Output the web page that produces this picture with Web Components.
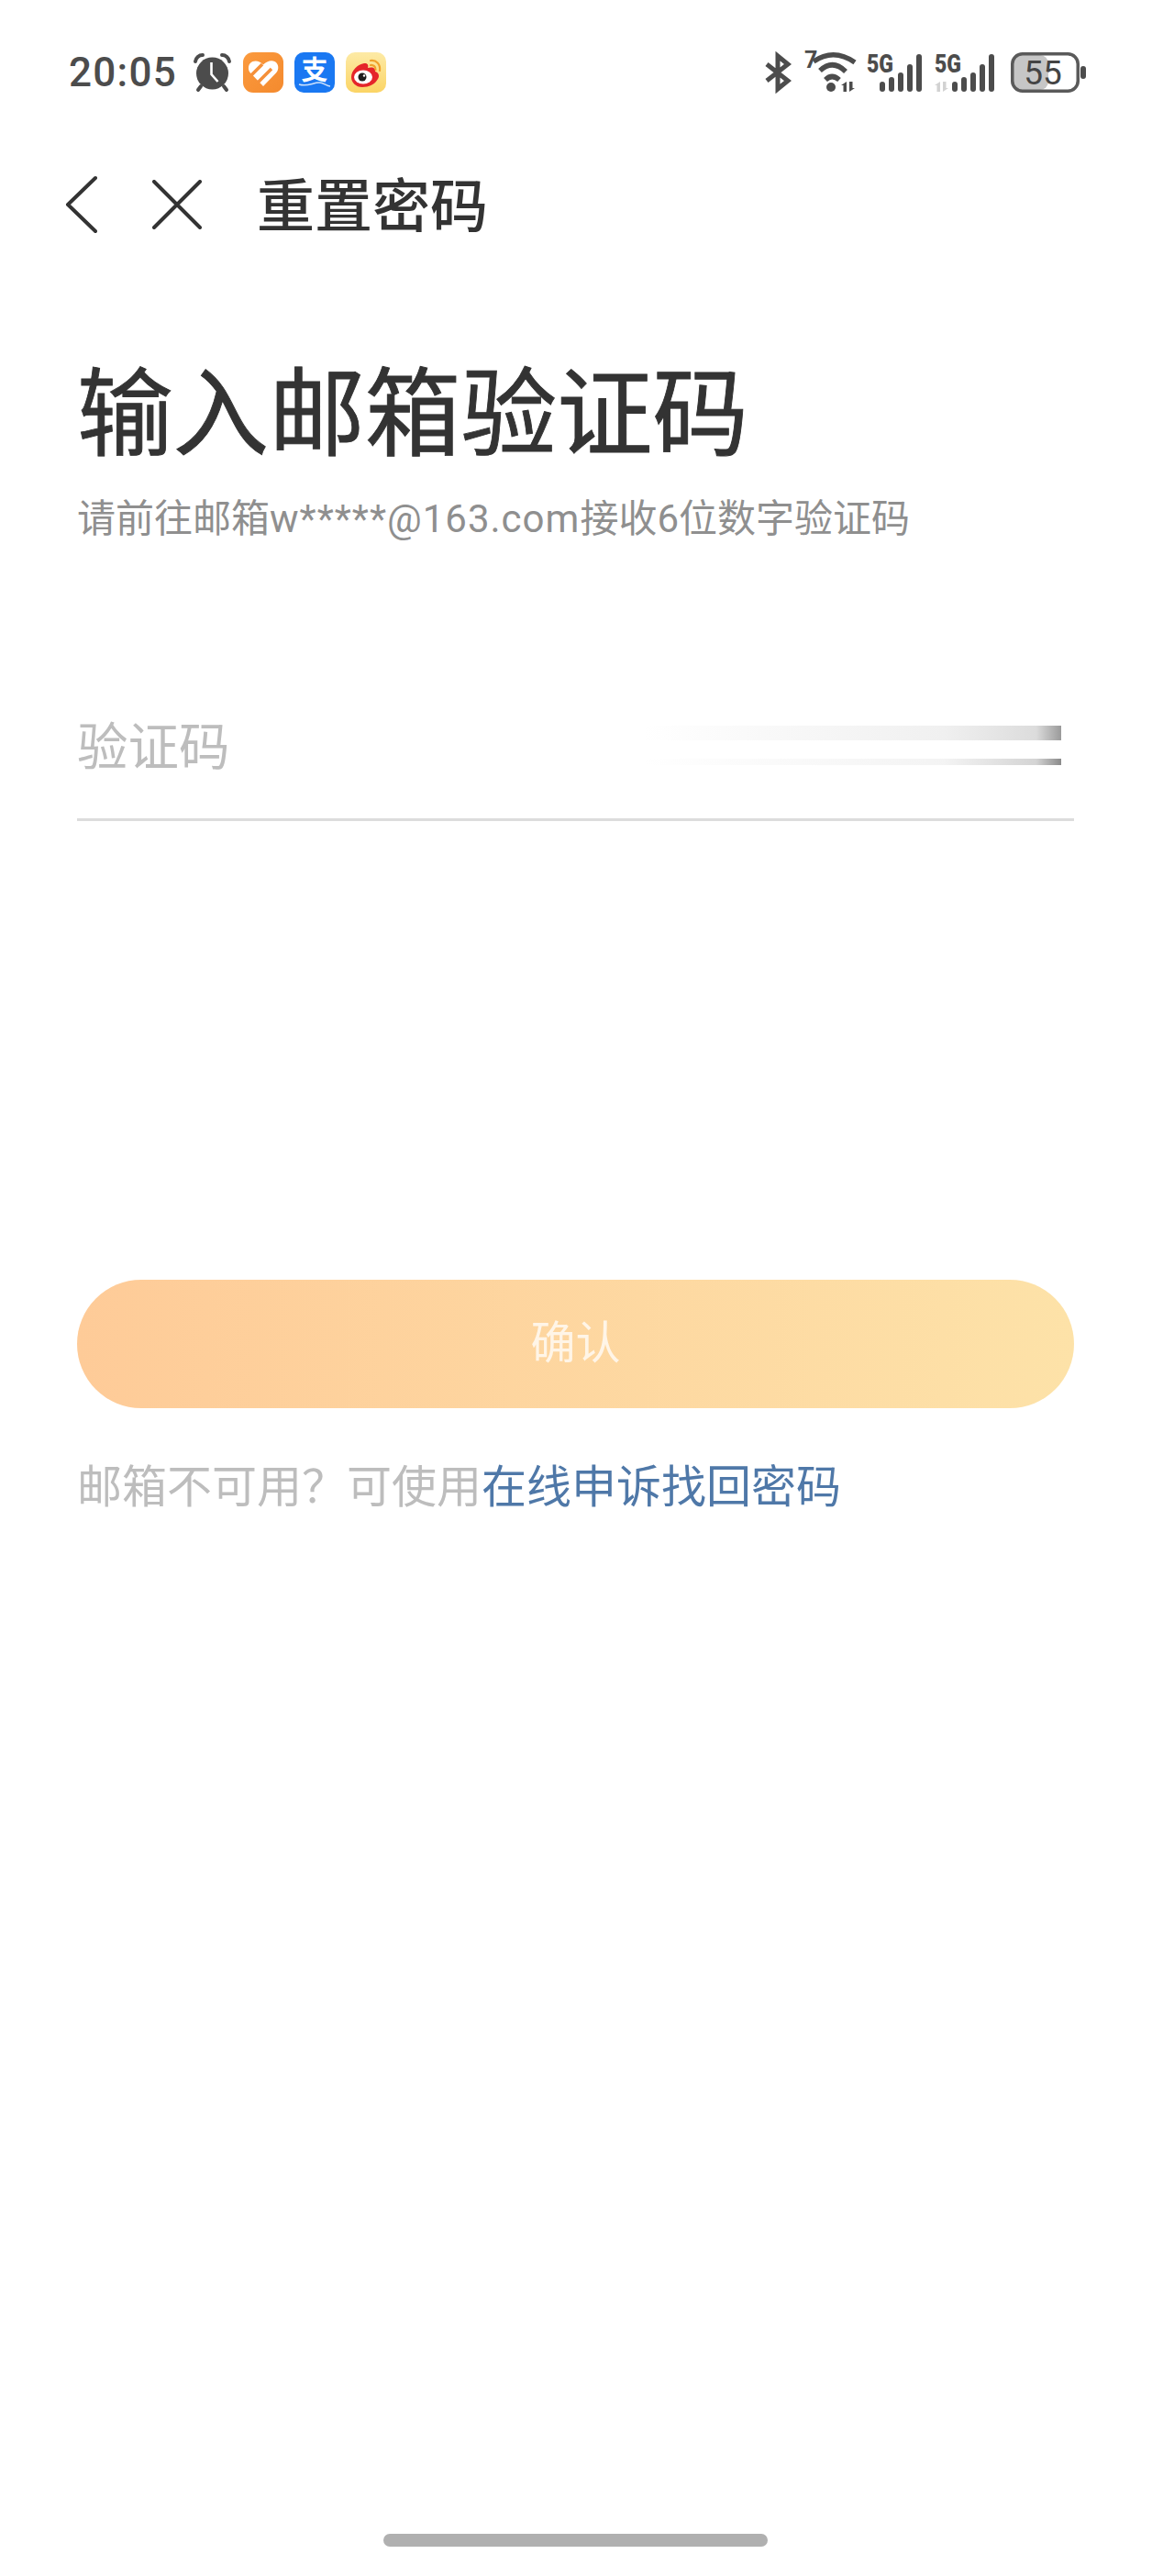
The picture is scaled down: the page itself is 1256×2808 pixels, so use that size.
<!DOCTYPE html>
<html lang="zh">
<head>
<meta charset="utf-8">
<title>重置密码</title>
<style>
    html, body { margin: 0; background: #fff; }
    body { font-family: "Noto Sans CJK SC", "Noto Sans", sans-serif; }
    reset-screen { height: 2808px; }
</style>
</head>
<body>
<reset-screen>
    <status-bar></status-bar>
    <nav-header>重置密码</nav-header>
    <page-heading sub="请前往邮箱w*****@163.com接收6位数字验证码">输入邮箱验证码</page-heading>
    <code-field placeholder="验证码"></code-field>
    <confirm-button>确认</confirm-button>
    <help-line link="在线申诉找回密码">邮箱不可用&#xFF1F;可使用</help-line>
    <home-indicator></home-indicator>
</reset-screen>

<script>
class ResetScreen extends HTMLElement {
    constructor() {
        super();
        this.attachShadow({ mode: 'open' });
        this.shadowRoot.innerHTML = `
            <style>
                :host { display: flex; flex-direction: column; width: 1256px; background: #fff; overflow: hidden; }
            </style>
            <slot></slot>
        `;
    }
}

class StatusBar extends HTMLElement {
    constructor() {
        super();
        this.attachShadow({ mode: 'open' });
        const bars = (x0) => [[0, 32], [10, 27], [20, 22], [30, 13], [40, 2]]
            .map(([dx, top]) => `<rect x="${x0 + dx}" y="${top}" width="6" height="${43 - top}" rx="3" fill="#4c4c4c"/>`).join('');
        const arrows = (x, c) => `
            <path d="M${x + 5} 32v11h-3.5v-7h-2.5z M${x + 8} 43v-11h3.5v7h2.5z" fill="${c}"/>`;
        this.shadowRoot.innerHTML = `
            <style>
                :host { display: flex; justify-content: space-between; align-items: center; height: 44px; padding: 57px 72px 0 75px; }
                .left, .right { display: flex; align-items: center; }
                .time { font: 500 44px/44px Roboto, sans-serif; color: #4c4c4c; width: 135px; letter-spacing: 1.3px; }
                svg { display: block; flex: none; overflow: visible; }
                svg text { font-family: Roboto, sans-serif; fill: #4c4c4c; }
                .app { margin-right: 12px; }
                .bt { margin-right: 14px; }
                .wifi { margin-right: 11px; }
                .sig1 { margin-right: 13px; }
                .sig2 { margin-right: 18px; }
            </style>
            <div class="left">
                <span class="time">20:05</span>
                <svg class="app" width="43" height="44" viewBox="0 0 43 44">
                    <path d="M3 10a8 8 0 0 1 8-7M40 10a8 8 0 0 0-8-7" fill="none" stroke="#4c4c4c" stroke-width="4" stroke-linecap="round"/>
                    <path d="M9 37l-3 4M34 37l3 4" stroke="#4c4c4c" stroke-width="4" stroke-linecap="round"/>
                    <circle cx="21.5" cy="23" r="17.5" fill="#4c4c4c"/>
                    <path d="M20.5 11v13l7 8" fill="none" stroke="#fff" stroke-width="2.6"/>
                </svg>
                <svg class="app" width="44" height="44" viewBox="0 0 44 44">
                    <defs><linearGradient id="og" x1="0" y1="0" x2="1" y2="1"><stop offset="0" stop-color="#fb9a3e"/><stop offset="1" stop-color="#f48a2e"/></linearGradient></defs>
                    <rect width="44" height="44" rx="11" fill="url(#og)"/>
                    <path d="M22 37L8 22.5C4.500 18.500 5.500 12 10.500 10C14.500 8.500 18.500 10 22 13.500C25.500 10 30.500 8 34.500 10C39 12.500 39.500 18.500 36 22.500Z" fill="#fff"/>
                    <path d="M9 25L21 13M16 33L31 18" stroke="#f5903a" stroke-width="3.500" fill="none"/>
                </svg>
                <svg class="app" width="44" height="44" viewBox="0 0 44 44">
                    <rect width="44" height="44" rx="10" fill="#1a78f2"/>
                    <text x="22" y="30" text-anchor="middle" font-size="29" font-weight="700" style="font-family:'Noto Sans CJK SC',sans-serif;fill:#fff">支</text>
                    <path d="M5 35C14 38 20 33 27 33C32 33 35 37 39 37" fill="none" stroke="#cfe2fb" stroke-width="1.500"/>
                </svg>
                <svg width="44" height="44" viewBox="0 0 44 44">
                    <defs><linearGradient id="wb" x1="0" y1="0" x2="0" y2="1"><stop offset="0" stop-color="#fdeaa6"/><stop offset="1" stop-color="#fbd465"/></linearGradient></defs>
                    <rect width="44" height="44" rx="10" fill="url(#wb)"/>
                    <path d="M6 27C6 20 13 13 20 12C24 11.500 25 14 24 17C29 15.500 33 17 32 21C36 22 37 26 35 29C32 35 25 38 18 38C11 38 6 33 6 27Z" fill="#e5252a"/>
                    <ellipse cx="19" cy="27" rx="10" ry="7.500" fill="#fff"/>
                    <circle cx="18" cy="27" r="4.500" fill="#1d1d1d"/>
                    <circle cx="20" cy="25.500" r="1.200" fill="#fff"/>
                    <path d="M27 9C33 8 38 13 37 20M27 14C30 13.500 33 16 32.500 19" fill="none" stroke="#f0a22c" stroke-width="2.200" stroke-linecap="round"/>
                </svg>
            </div>
            <div class="right">
                <svg class="bt" width="30" height="42" viewBox="0 0 30 42">
                    <path d="M3 12L26 30L15 39V3L26 12L3 30" fill="none" stroke="#4c4c4c" stroke-width="5"/>
                </svg>
                <svg class="wifi" width="57" height="44" viewBox="0 0 57 44">
                    <text x="0" y="17" font-size="25" font-weight="700">7</text>
                    <path d="M10 10Q32 -5 55 11M17 20Q31 7 45 21M23 30Q30 23 38 30" fill="none" stroke="#4c4c4c" stroke-width="5.500"/>
                    <circle cx="29" cy="38" r="5" fill="#4c4c4c"/>
                    ${arrows(41, '#4c4c4c')}
                </svg>
                <svg class="sig1" width="61" height="44" viewBox="0 0 61 44">
                    <text x="0" y="22" font-size="28" font-weight="900" textLength="29" lengthAdjust="spacingAndGlyphs">5G</text>
                    ${bars(14)}
                </svg>
                <svg class="sig2" width="65" height="44" viewBox="0 0 65 44">
                    <text x="0" y="22" font-size="28" font-weight="900" textLength="29" lengthAdjust="spacingAndGlyphs">5G</text>
                    ${arrows(1, '#d2d2d2')}
                    ${bars(19)}
                </svg>
                <svg width="82" height="44" viewBox="0 0 82 44">
                    <rect x="3" y="3" width="38" height="38" rx="9" fill="#c6c6c6"/>
                    <rect x="1.750" y="1.750" width="71.500" height="40.500" rx="11" fill="none" stroke="#5a5a5a" stroke-width="3.500"/>
                    <text x="35" y="35" text-anchor="middle" font-size="37" style="fill:#444">55</text>
                    <rect x="76" y="15" width="6" height="14" rx="3" fill="#4c4c4c"/>
                </svg>
            </div>
        `;
    }
}

class NavHeader extends HTMLElement {
    constructor() {
        super();
        this.attachShadow({ mode: 'open' });
        this.shadowRoot.innerHTML = `
            <style>
                :host { display: flex; align-items: center; height: 64px; margin-top: 90px; padding-left: 71px; }
                svg { display: block; flex: none; }
                .back { margin-right: 60px; }
                .close { margin-right: 60px; }
                .title { font-size: 63px; line-height: 64px; color: #333; font-weight: 500; white-space: nowrap; padding-bottom: 6px; }
            </style>
            <svg class="back" width="35" height="64" viewBox="0 0 35 64" fill="none" stroke="#333" stroke-width="4" stroke-linecap="round" stroke-linejoin="round">
                <path d="M33 3L3 32L33 61"/>
            </svg>
            <svg class="close" width="54" height="54" viewBox="0 0 54 54" fill="none" stroke="#333" stroke-width="4" stroke-linecap="round">
                <path d="M2 2L52 52M52 2L2 52"/>
            </svg>
            <span class="title"><slot></slot></span>
        `;
    }
}

class PageHeading extends HTMLElement {
    constructor() {
        super();
        this.attachShadow({ mode: 'open' });
        const sub = (this.getAttribute('sub') || '').replace(/w\*+@[\w.]+/, '<span class="mail">$&</span>');
        this.shadowRoot.innerHTML = `
            <style>
                :host { display: block; margin-top: 128px; padding-left: 84px; }
                h1 { margin: 0; font-size: 104.600px; line-height: 120px; font-weight: 400; -webkit-text-stroke: 0.900px #333; color: #333; white-space: nowrap; }
                p { margin: 35px 0 0; font-size: 42px; line-height: 56px; color: #8f8f8f; white-space: nowrap; font-family: Roboto, "Noto Sans CJK SC", sans-serif; }
                .mail { letter-spacing: 1px; }
            </style>
            <h1><slot></slot></h1>
            <p>${sub}</p>
        `;
    }
}

class CodeField extends HTMLElement {
    constructor() {
        super();
        this.attachShadow({ mode: 'open' });
        const placeholder = this.getAttribute('placeholder') || '';
        this.shadowRoot.innerHTML = `
            <style>
                :host { display: block; position: relative; margin: 142px 85px 0 84px; padding: 37px 0 45px; border-bottom: 3px solid #dcdcdc; }
                .ph { display: block; font-size: 55.500px; line-height: 74px; color: #bdbdbd; }
                .smear { position: absolute; left: 618px; width: 455px; }
                .a { top: 55px; height: 16px; background: linear-gradient(90deg, rgba(200,200,200,0), rgba(230,230,230,.6) 72%, #dcdcdc 94%, #9a9a9a 100%); }
                .b { top: 91px; height: 7px; background: linear-gradient(90deg, rgba(200,200,200,0), rgba(232,232,232,.5) 72%, #d4d4d4 94%, #8a8a8a 100%); }
            </style>
            <span class="ph">${placeholder}</span>
            <div class="smear a"></div>
            <div class="smear b"></div>
        `;
    }
}

class ConfirmButton extends HTMLElement {
    constructor() {
        super();
        this.attachShadow({ mode: 'open' });
        this.shadowRoot.innerHTML = `
            <style>
                :host { display: flex; justify-content: center; align-items: center; box-sizing: border-box; height: 140px; margin: 500px 85px 0 84px; padding-bottom: 12px; border-radius: 70px;
                    background: linear-gradient(90deg, #fecb98, #fde2a8); color: rgba(255,255,255,.75); font-size: 49px; }
            </style>
            <slot></slot>
        `;
    }
}

class HelpLine extends HTMLElement {
    constructor() {
        super();
        this.attachShadow({ mode: 'open' });
        const link = this.getAttribute('link') || '';
        this.shadowRoot.innerHTML = `
            <style>
                :host { display: block; margin-top: 48px; padding-left: 84px; font-size: 49px; line-height: 68px; color: #bdbdbd; white-space: nowrap; }
                a { color: #4f78a8; text-decoration: none; }
            </style>
            <slot></slot><a>${link}</a>
        `;
    }
}

class HomeIndicator extends HTMLElement {
    constructor() {
        super();
        this.attachShadow({ mode: 'open' });
        this.shadowRoot.innerHTML = `
            <style>
                :host { display: block; width: 419px; height: 14px; margin: auto 0 32px 418px; border-radius: 7px; background: #b0b0b0; }
            </style>
        `;
    }
}

customElements.define('reset-screen', ResetScreen);
customElements.define('status-bar', StatusBar);
customElements.define('nav-header', NavHeader);
customElements.define('page-heading', PageHeading);
customElements.define('code-field', CodeField);
customElements.define('confirm-button', ConfirmButton);
customElements.define('help-line', HelpLine);
customElements.define('home-indicator', HomeIndicator);
</script>
</body>
</html>
